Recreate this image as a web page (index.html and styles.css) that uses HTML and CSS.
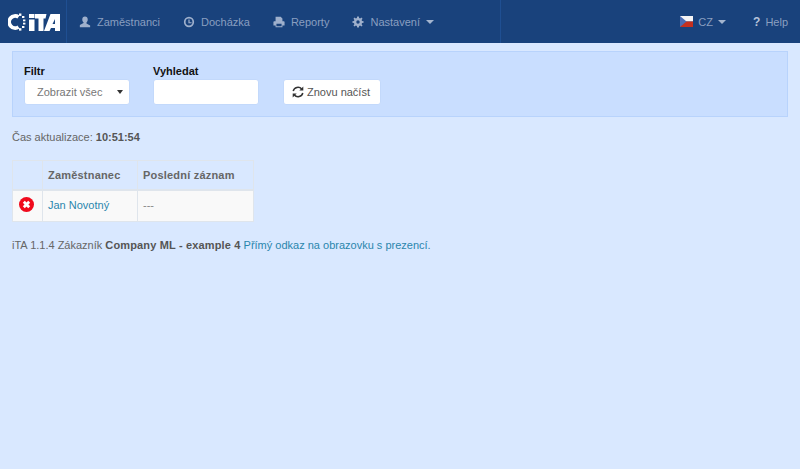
FILE: index.html
```html
<!DOCTYPE html>
<html lang="cs">
<head>
<meta charset="utf-8">
<title>iTA</title>
<link rel="stylesheet" href="styles.css">
</head>
<body>
<nav class="navbar">
  <a class="brand" href="#">
    <svg class="logo" width="52" height="18" viewBox="0 0 52 18">
      <path d="M10.500 4A6 6 0 1 0 10.500 14" fill="none" stroke="#fff" stroke-width="3.800"/>
      <g fill="#fff">
        <rect x="11" y="0.500" width="2.400" height="2.400"/>
        <rect x="14" y="3" width="2.400" height="2"/>
        <rect x="15" y="6.500" width="2.400" height="1.800"/>
        <rect x="15" y="9.700" width="2.400" height="1.800"/>
        <rect x="14" y="13" width="2.400" height="2"/>
        <rect x="11" y="15.200" width="2.400" height="2.400"/>
        <path d="M21 6.500h5.500V18H21zM21 1h5.500v4H21zM27 1h11.500l-1 4.500H35.500V18h-5V5.500H27zM42.500 1H52v17h-5v-3h-4l-1.500 3H36zM47 6l-2.500 5H47z" fill-rule="evenodd"/>
      </g>
    </svg>
  </a>
  <ul class="nav nav-main">
    <li><a href="#">
      <svg class="icon" viewBox="0 0 14 14"><path d="M7 0.500c2 0 3.200 1.500 3.200 3.500 0 1.500-.7 3-1.500 3.700v1l4.300 2.300V13H1v-2.500l4.300-2.300v-1C4.500 7 3.800 5.500 3.800 4 3.800 2 5 .5 7 .5z"/></svg>
      Zaměstnanci</a></li>
    <li><a href="#">
      <svg class="icon" viewBox="0 0 14 14"><path fill-rule="evenodd" d="M7 1a6 6 0 1 1 0 12A6 6 0 0 1 7 1zm0 2a4 4 0 1 0 0 8 4 4 0 0 0 0-8z"/><path d="M6.300 4h1.400v3.200H10v1.300H6.300z"/></svg>
      Docházka</a></li>
    <li><a href="#">
      <svg class="icon" viewBox="0 0 14 14"><path fill-rule="evenodd" d="M3 1h6l2 2v3h1.500a1 1 0 0 1 1 1v4H11v2H3v-2H.5V7a1 1 0 0 1 1-1H3zm1 8v3h6V9z"/></svg>
      Reporty</a></li>
    <li><a href="#">
      <svg class="icon" viewBox="0 0 14 14"><path fill-rule="evenodd" d="M6 .5h2l.3 1.900 1.200.5L11 1.800l1.300 1.300-1.100 1.500.5 1.200 1.800.3v1.900l-1.800.3-.5 1.200 1.100 1.500-1.300 1.300-1.500-1.100-1.200.5L8 13.500H6l-.3-1.800-1.200-.5L3 12.300 1.700 11l1.100-1.500-.5-1.200-1.800-.3V6.100l1.800-.3.500-1.200L1.700 3.100 3 1.800l1.500 1.100 1.200-.5zM7 5a2 2 0 1 0 0 4 2 2 0 0 0 0-4z"/></svg>
      Nastavení <span class="caret"></span></a></li>
  </ul>
  <ul class="nav nav-right">
    <li><a href="#">
      <svg class="flag" width="13" height="11" viewBox="0 0 13 11"><rect width="13" height="5.500" fill="#f4f4f6"/><rect y="5.500" width="13" height="5.500" fill="#c5301f"/><path d="M0 0l6.500 5.500L0 11z" fill="#4a6cb4"/></svg>
      CZ <span class="caret caret-lang"></span></a></li>
    <li><a href="#"><span class="qmark">?</span> Help</a></li>
  </ul>
</nav>
<main class="content">
  <form class="well">
    <div class="field field-filter">
      <label class="label">Filtr</label>
      <div class="select">Zobrazit všec<span class="select-arrow"></span></div>
    </div>
    <div class="field field-search">
      <label class="label">Vyhledat</label>
      <div class="input"></div>
    </div>
    <button class="btn" type="button">
      <svg class="reload" width="12" height="12" viewBox="0 0 12 12"><path d="M1.200 5A4.900 4.900 0 0 1 9.700 3M10.800 7A4.900 4.900 0 0 1 2.300 9" fill="none" stroke="#333" stroke-width="1.500"/><path d="M11.300.6v4h-4zM.7 11.400v-4h4z" fill="#333"/></svg>
      Znovu načíst</button>
  </form>
  <p class="time">Čas aktualizace: <b>10:51:54</b></p>
  <table class="table">
    <thead>
      <tr><th class="c-status"></th><th class="c-name">Zaměstnanec</th><th class="c-last">Poslední záznam</th></tr>
    </thead>
    <tbody>
      <tr>
        <td class="cell-status"><svg class="status" width="15" height="15" viewBox="0 0 15 15"><circle cx="7.500" cy="7.500" r="7.500" fill="#f00a1c"/><path d="M4.800 4.800l5.400 5.400M10.200 4.800l-5.400 5.400" stroke="#fff" stroke-width="2.800"/></svg></td>
        <td><a href="#">Jan Novotný</a></td>
        <td class="dash">---</td>
      </tr>
    </tbody>
  </table>
  <p class="footer">iTA 1.1.4 Zákazník <b>Company ML - example 4</b> <a href="#">Přímý odkaz na obrazovku s prezencí.</a></p>
</main>
</body>
</html>
```
FILE: styles.css
```css
* { box-sizing: border-box; }
html, body { height: 100%; }
body {
  margin: 0;
  background: #d9e8ff;
  color: #666;
  font: 11px/16px "Liberation Sans", Arial, sans-serif;
  overflow: hidden;
}
b { color: #555; }
a { color: #2a86ad; text-decoration: none; }
.navbar {
  height: 43px;
  background: #19427c;
  display: flex;
  align-items: stretch;
}
.brand {
  width: 67px;
  padding: 13px 0 0 8px;
  border-right: 1px solid #1f4f92;
}
.logo { display: block; }
.nav {
  list-style: none;
  margin: 0;
  padding: 0;
  display: flex;
}
.nav a {
  display: flex;
  align-items: center;
  height: 43px;
  color: #8a9fc0;
}
.nav-main {
  width: 434px;
  padding-left: 12px;
  gap: 23px;
  border-right: 1px solid #1f4f92;
}
.nav-right {
  margin-left: auto;
  padding-right: 12px;
  gap: 27px;
}
.icon {
  width: 12px;
  height: 12px;
  margin-right: 6px;
  fill: #9fb0cc;
}
.caret {
  width: 0;
  height: 0;
  margin-left: 6px;
  border: 4px solid transparent;
  border-top-color: #a4b5cf;
  border-bottom: 0;
}
.caret-lang { margin-left: 5px; }
.flag { margin-right: 5px; }
.qmark {
  margin-right: 5px;
  color: #b5c3da;
  font-weight: bold;
  font-size: 12px;
}
.content { padding: 8px 12px 0; }
.well {
  height: 66px;
  background: #c9deff;
  border: 1px solid #b8d3fc;
  padding: 12px 11px;
  display: flex;
  align-items: flex-start;
}
.label {
  display: block;
  color: #111;
  font-weight: bold;
  height: 15px;
  line-height: 15px;
}
.field-filter { width: 129px; }
.field-search { width: 130px; }
.select, .input {
  position: relative;
  height: 26px;
  background: #fff;
  border: 1px solid #c3d9fb;
  border-radius: 3px;
  color: #777;
  line-height: 24px;
}
.select { width: 106px; padding-left: 12px; }
.input { width: 106px; }
.select-arrow {
  position: absolute;
  right: 6px;
  top: 10px;
  width: 0;
  height: 0;
  border: 3px solid transparent;
  border-top: 4px solid #333;
  border-bottom: 0;
}
.btn {
  margin-top: 15px;
  width: 98px;
  height: 26px;
  padding: 0 2px 0 0;
  background: #fff;
  border: 1px solid #c3d9fb;
  border-radius: 3px;
  color: #555;
  font: inherit;
  display: flex;
  align-items: center;
  justify-content: center;
  gap: 3px;
}
.time { margin: 12px 0 15px; height: 16px; }
.table {
  border-collapse: collapse;
  width: 242px;
  table-layout: fixed;
}
.table th, .table td {
  border: 1px solid #dfe5ec;
  padding: 0 5px;
  text-align: left;
}
.table th {
  height: 29px;
  border-bottom-width: 2px;
  letter-spacing: 0.2px;
}
.table td { height: 32px; padding-bottom: 2px; background: #f9f9f9; }
.c-status { width: 30px; }
.c-name { width: 95px; }
.table .cell-status { padding: 0 0 2px 6px; }
.status { display: block; }
.dash { color: #888; }
.footer { margin: 15px 0 0; }
.footer b { letter-spacing: 0.15px; }
```
